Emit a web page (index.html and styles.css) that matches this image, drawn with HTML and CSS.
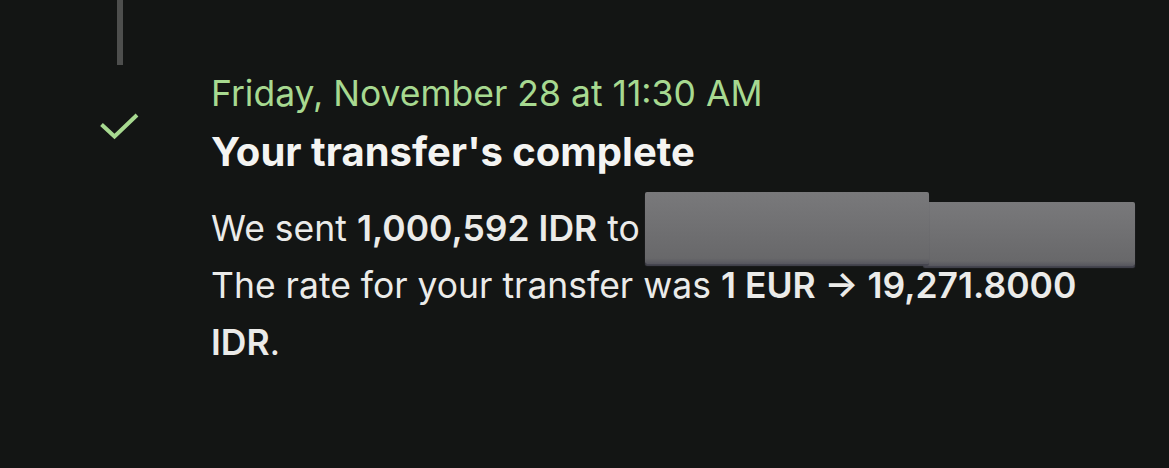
FILE: index.html
```html
<!DOCTYPE html>
<html lang="en">
<head>
<meta charset="utf-8">
<link rel="stylesheet" href="styles.css">
<title>Transfer complete</title>
</head>
<body>
<div class="timeline">
  <div class="rail-top"><span class="rail-line"></span></div>
  <div class="event">
    <div class="event-icon">
      <svg width="40" height="28" viewBox="0 0 40 28" aria-hidden="true">
        <polyline points="2.5,12.5 15.5,24.5 38,3" fill="none" stroke="#a7d990" stroke-width="4" stroke-linecap="butt" stroke-linejoin="miter"/>
      </svg>
    </div>
    <div class="event-body">
      <div class="event-date">Friday, November 28 at 11:30 AM</div>
      <h2 class="event-title">Your transfer's complete</h2>
      <p class="event-text">We sent <b>1,000,592 IDR</b> to<br>The rate for your transfer was <b>1 EUR → 19,271.8000 IDR</b>.<span class="redact redact-b"></span><span class="redact redact-a"></span></p>
    </div>
  </div>
</div>
</body>
</html>
```

FILE: styles.css
```css
html, body {
  margin: 0;
  padding: 0;
  background: #131514;
}
body {
  width: 1169px;
  height: 468px;
  overflow: hidden;
  font-family: Inter, "Liberation Sans", sans-serif;
  color: #f2f2f0;
}
.timeline {
  display: flex;
  flex-direction: column;
}
.rail-top {
  height: 65px;
  display: flex;
  padding-left: 117px;
}
.rail-line {
  width: 6px;
  height: 65px;
  background: #4d4e4d;
}
.event {
  display: grid;
  grid-template-columns: 211px 1fr;
}
.event-icon {
  padding-top: 47px;
  padding-left: 99px;
}
.event-icon svg {
  display: block;
}
.event-body {
  padding-top: 7px;
}
.event-date {
  font-size: 35.5px;
  line-height: 44px;
  color: #a7d990;
  font-weight: 400;
}
.event-title {
  margin: 10px 0 0;
  font-size: 40px;
  line-height: 52px;
  font-weight: 700;
  color: #f4f4f2;
}
.event-text {
  position: relative;
  margin: 22px 0 0;
  font-size: 35.5px;
  line-height: 57px;
  color: #ebebe9;
  width: 900px;
}
.event-text b {
  font-weight: 600;
}
.redact {
  position: absolute;
  background: linear-gradient(180deg, #79797b 0%, #6e6e70 60%, #68686a 92%, #56565e 100%);
  border-radius: 2px;
  box-shadow: 0 2px 1px #45454f;
}
.redact-a {
  left: 434px;
  top: -8px;
  width: 284px;
  height: 72px;
}
.redact-b {
  left: 712px;
  top: 2px;
  width: 212px;
  height: 64px;
}
```
